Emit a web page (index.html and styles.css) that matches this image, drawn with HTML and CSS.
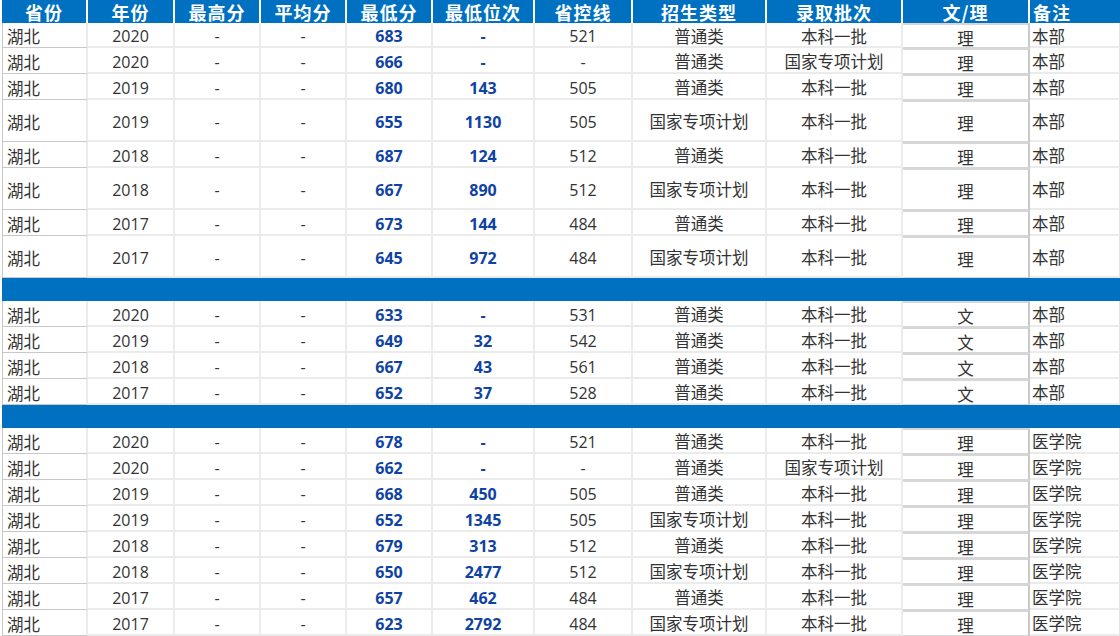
FILE: index.html
```html
<!DOCTYPE html>
<html lang="zh-CN">
<head>
<meta charset="utf-8">
<title>录取分数</title>
<link rel="stylesheet" href="styles.css">
</head>
<body>
<div class="sheet">
  <div class="row head">
    <div class="c">省份</div><div class="c">年份</div><div class="c">最高分</div><div class="c">平均分</div><div class="c">最低分</div><div class="c">最低位次</div><div class="c">省控线</div><div class="c">招生类型</div><div class="c">录取批次</div><div class="c">文/理</div><div class="c note">备注</div>
  </div>

  <div class="row first"><div class="c prov">湖北</div><div class="c">2020</div><div class="c">-</div><div class="c">-</div><div class="c b">683</div><div class="c b">-</div><div class="c">521</div><div class="c zh">普通类</div><div class="c zh">本科一批</div><div class="c wl">理</div><div class="c note">本部</div></div>
  <div class="row"><div class="c prov">湖北</div><div class="c">2020</div><div class="c">-</div><div class="c">-</div><div class="c b">666</div><div class="c b">-</div><div class="c">-</div><div class="c zh">普通类</div><div class="c zh">国家专项计划</div><div class="c wl">理</div><div class="c note">本部</div></div>
  <div class="row"><div class="c prov">湖北</div><div class="c">2019</div><div class="c">-</div><div class="c">-</div><div class="c b">680</div><div class="c b">143</div><div class="c">505</div><div class="c zh">普通类</div><div class="c zh">本科一批</div><div class="c wl">理</div><div class="c note">本部</div></div>
  <div class="row tall"><div class="c prov">湖北</div><div class="c">2019</div><div class="c">-</div><div class="c">-</div><div class="c b">655</div><div class="c b">1130</div><div class="c">505</div><div class="c zh">国家专项计划</div><div class="c zh">本科一批</div><div class="c wl">理</div><div class="c note">本部</div></div>
  <div class="row"><div class="c prov">湖北</div><div class="c">2018</div><div class="c">-</div><div class="c">-</div><div class="c b">687</div><div class="c b">124</div><div class="c">512</div><div class="c zh">普通类</div><div class="c zh">本科一批</div><div class="c wl">理</div><div class="c note">本部</div></div>
  <div class="row tall"><div class="c prov">湖北</div><div class="c">2018</div><div class="c">-</div><div class="c">-</div><div class="c b">667</div><div class="c b">890</div><div class="c">512</div><div class="c zh">国家专项计划</div><div class="c zh">本科一批</div><div class="c wl">理</div><div class="c note">本部</div></div>
  <div class="row"><div class="c prov">湖北</div><div class="c">2017</div><div class="c">-</div><div class="c">-</div><div class="c b">673</div><div class="c b">144</div><div class="c">484</div><div class="c zh">普通类</div><div class="c zh">本科一批</div><div class="c wl">理</div><div class="c note">本部</div></div>
  <div class="row tall"><div class="c prov">湖北</div><div class="c">2017</div><div class="c">-</div><div class="c">-</div><div class="c b">645</div><div class="c b">972</div><div class="c">484</div><div class="c zh">国家专项计划</div><div class="c zh">本科一批</div><div class="c wl">理</div><div class="c note">本部</div></div>

  <div class="band"></div>

  <div class="row"><div class="c prov">湖北</div><div class="c">2020</div><div class="c">-</div><div class="c">-</div><div class="c b">633</div><div class="c b">-</div><div class="c">531</div><div class="c zh">普通类</div><div class="c zh">本科一批</div><div class="c wl">文</div><div class="c note">本部</div></div>
  <div class="row"><div class="c prov">湖北</div><div class="c">2019</div><div class="c">-</div><div class="c">-</div><div class="c b">649</div><div class="c b">32</div><div class="c">542</div><div class="c zh">普通类</div><div class="c zh">本科一批</div><div class="c wl">文</div><div class="c note">本部</div></div>
  <div class="row"><div class="c prov">湖北</div><div class="c">2018</div><div class="c">-</div><div class="c">-</div><div class="c b">667</div><div class="c b">43</div><div class="c">561</div><div class="c zh">普通类</div><div class="c zh">本科一批</div><div class="c wl">文</div><div class="c note">本部</div></div>
  <div class="row"><div class="c prov">湖北</div><div class="c">2017</div><div class="c">-</div><div class="c">-</div><div class="c b">652</div><div class="c b">37</div><div class="c">528</div><div class="c zh">普通类</div><div class="c zh">本科一批</div><div class="c wl">文</div><div class="c note">本部</div></div>

  <div class="band"></div>

  <div class="row"><div class="c prov">湖北</div><div class="c">2020</div><div class="c">-</div><div class="c">-</div><div class="c b">678</div><div class="c b">-</div><div class="c">521</div><div class="c zh">普通类</div><div class="c zh">本科一批</div><div class="c wl">理</div><div class="c note">医学院</div></div>
  <div class="row"><div class="c prov">湖北</div><div class="c">2020</div><div class="c">-</div><div class="c">-</div><div class="c b">662</div><div class="c b">-</div><div class="c">-</div><div class="c zh">普通类</div><div class="c zh">国家专项计划</div><div class="c wl">理</div><div class="c note">医学院</div></div>
  <div class="row"><div class="c prov">湖北</div><div class="c">2019</div><div class="c">-</div><div class="c">-</div><div class="c b">668</div><div class="c b">450</div><div class="c">505</div><div class="c zh">普通类</div><div class="c zh">本科一批</div><div class="c wl">理</div><div class="c note">医学院</div></div>
  <div class="row"><div class="c prov">湖北</div><div class="c">2019</div><div class="c">-</div><div class="c">-</div><div class="c b">652</div><div class="c b">1345</div><div class="c">505</div><div class="c zh">国家专项计划</div><div class="c zh">本科一批</div><div class="c wl">理</div><div class="c note">医学院</div></div>
  <div class="row"><div class="c prov">湖北</div><div class="c">2018</div><div class="c">-</div><div class="c">-</div><div class="c b">679</div><div class="c b">313</div><div class="c">512</div><div class="c zh">普通类</div><div class="c zh">本科一批</div><div class="c wl">理</div><div class="c note">医学院</div></div>
  <div class="row"><div class="c prov">湖北</div><div class="c">2018</div><div class="c">-</div><div class="c">-</div><div class="c b">650</div><div class="c b">2477</div><div class="c">512</div><div class="c zh">国家专项计划</div><div class="c zh">本科一批</div><div class="c wl">理</div><div class="c note">医学院</div></div>
  <div class="row"><div class="c prov">湖北</div><div class="c">2017</div><div class="c">-</div><div class="c">-</div><div class="c b">657</div><div class="c b">462</div><div class="c">484</div><div class="c zh">普通类</div><div class="c zh">本科一批</div><div class="c wl">理</div><div class="c note">医学院</div></div>
  <div class="row"><div class="c prov">湖北</div><div class="c">2017</div><div class="c">-</div><div class="c">-</div><div class="c b">623</div><div class="c b">2792</div><div class="c">484</div><div class="c zh">国家专项计划</div><div class="c zh">本科一批</div><div class="c wl">理</div><div class="c note">医学院</div></div>
</div>
</body>
</html>
```

FILE: styles.css
```css
* { box-sizing: border-box; }
html, body { margin: 0; padding: 0; background: #ffffff; }
body {
  width: 1120px;
  height: 636px;
  overflow: hidden;
  font-family: "Open Sans", "Noto Sans CJK SC", sans-serif;
  font-size: 16px;
  color: #333333;
}
.sheet {
  margin-left: 2px;
  width: 1118px;
}
.row {
  display: grid;
  grid-template-columns: 86px 87px 86px 86px 86px 102px 98px 134px 136px 127px 1fr;
  height: 26px;
}
.row.first { height: 25px; }
.row.tall { height: 42px; }
.c {
  display: flex;
  align-items: center;
  justify-content: center;
  padding-top: 3px;
  border-right: 2px solid #ebebeb;
  border-bottom: 2px solid #ebebeb;
  white-space: nowrap;
  line-height: 1;
}
.c.zh,
.c.wl,
.c.note,
.c.prov {
  font-family: "Noto Sans CJK SC", sans-serif;
  font-size: 16.5px;
}
.c.prov {
  justify-content: flex-start;
  padding-left: 4px;
  border-left: 1px solid #c8c8c8;
  border-bottom: 1px solid #c8c8c8;
}
.c.b {
  font-weight: 700;
  color: #0e43a3;
}
.c.wl {
  border-top: 2px solid #d6d6d6;
  border-bottom: 1px solid #d6d6d6;
  border-right: 2px solid #c9c9c9;
  padding-top: 4px;
}
.c.note {
  justify-content: flex-start;
  padding-left: 2px;
  border-right: 1px solid #e2e2e2;
}
.head {
  height: 23px;
}
.head .c {
  background: #0070c0;
  color: #ffffff;
  font-family: "Noto Sans CJK SC", sans-serif;
  font-weight: 700;
  font-size: 18px;
  letter-spacing: 1px;
  padding-top: 0;
  border-right: 2px solid #ffffff;
  border-bottom: 0;
}
.head .c.note {
  padding-left: 3px;
  border-right: 0;
}
.band {
  height: 23px;
  background: #0070c0;
}
```
